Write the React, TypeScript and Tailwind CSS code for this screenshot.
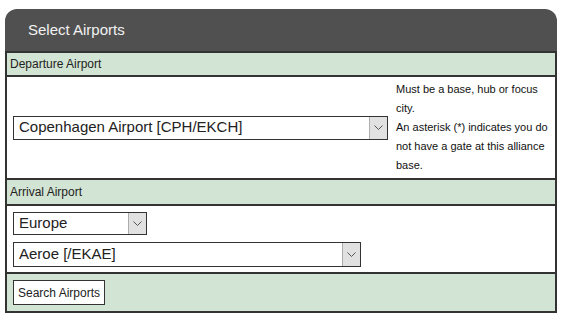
const font = { fontFamily: 'Tahoma, "Liberation Sans", Arial, sans-serif' };

function Chevron() {
  return (
    <svg width="9" height="5" viewBox="0 0 9 5" fill="none">
      <path d="M0.5 0.5 L4.5 4.5 L8.5 0.5" stroke="#555" strokeWidth="1" />
    </svg>
  );
}

function FakeSelect({ value, width, height }: { value: string; width: string; height: string }) {
  return (
    <div className={`flex items-stretch border border-[#333] bg-white ${width} ${height}`}>
      <span className="flex flex-1 items-center truncate pl-[5px] text-[15px] text-[#222]">{value}</span>
      <span className="flex w-[18px] items-center justify-center border-l border-[#adadad] bg-[#e1e1e1]">
        <Chevron />
      </span>
    </div>
  );
}

export default function App() {
  return (
    <div className="min-h-screen bg-white pl-[5px] pt-[9px]" style={font}>
      <div className="w-[552px]">
        {/* Header */}
        <div className="flex h-[42px] items-center rounded-t-[12px] bg-[#505050] pl-[23px] text-[15px] text-[#f2f2f2]">
          Select Airports
        </div>

        <div className="border-x-2 border-b-2 border-[#333]">
          {/* Departure */}
          <div className="flex h-[26px] items-center border-t-2 border-b-2 border-[#333] bg-[#d2e4d3] pl-[3px] text-[12px] text-[#222]">
            Departure Airport
          </div>
          <div className="flex h-[101px] items-center">
            <div className="flex flex-1 items-center pl-[6px]">
              <FakeSelect value="Copenhagen Airport [CPH/EKCH]" width="w-[375px]" height="h-[24px]" />
            </div>
            <div className="w-[159px] text-[11px] leading-[19px] text-[#111]">
              Must be a base, hub or focus city.
              <br />
              An asterisk (*) indicates you do not have a gate at this alliance base.
            </div>
          </div>

          {/* Arrival */}
          <div className="flex h-[28px] items-center border-y-2 border-[#333] bg-[#d2e4d3] pl-[3px] text-[12px] text-[#222]">
            Arrival Airport
          </div>
          <div className="flex h-[66px] flex-col justify-center gap-[7px] pl-[6px]">
            <FakeSelect value="Europe" width="w-[134px]" height="h-[23px]" />
            <FakeSelect value="Aeroe [/EKAE]" width="w-[348px]" height="h-[25px]" />
          </div>

          {/* Footer */}
          <div className="flex h-[39px] items-center border-t-2 border-[#333] bg-[#d2e4d3] pl-[6px]">
            <button className="h-[25px] w-[92px] border border-[#333] bg-white text-[12px] text-[#222]">
              Search Airports
            </button>
          </div>
        </div>
      </div>
    </div>
  );
}
